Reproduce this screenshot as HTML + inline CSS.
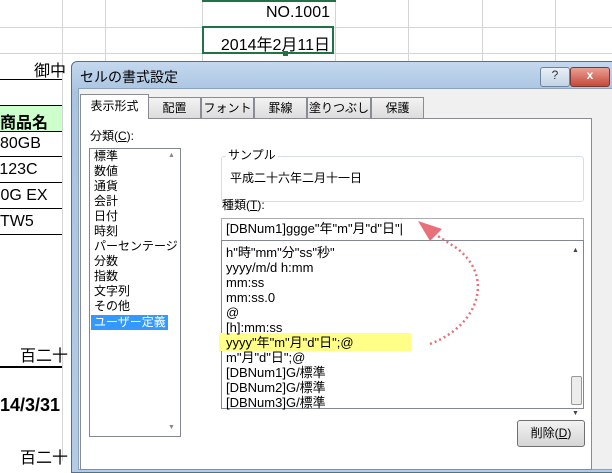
<html><head><style>
body{margin:0;width:612px;height:461px;overflow:hidden;background:#fff;font-family:"Liberation Sans","Noto Sans CJK JP",sans-serif;position:relative}
.a{position:absolute}
.vl{position:absolute;top:0;width:1px;height:461px;background:#d4d4d4}
.hl{position:absolute;left:0;height:1px;width:612px;background:#d4d4d4}
.s{font-size:16px;color:#000;white-space:nowrap}
.t{font-size:12px;color:#000;white-space:nowrap;line-height:15px}
.r{font-size:13px;color:#000;white-space:nowrap;line-height:15px}
</style></head><body>
<div class="vl" style="left:62px"></div><div class="vl" style="left:105px"></div><div class="vl" style="left:202px"></div><div class="vl" style="left:335px"></div><div class="vl" style="left:408px"></div><div class="vl" style="left:482px"></div><div class="vl" style="left:555px"></div>
<div class="hl" style="top:27px"></div><div class="hl" style="top:53px"></div>
<div class="a" style="left:202px;top:0;width:134px;height:2px;background:#217346"></div>
<div class="a s" style="left:202px;top:4px;width:128px;text-align:right">NO.1001</div>
<div class="a" style="left:202px;top:26px;width:128px;height:24px;border:2px solid #217346"></div>
<div class="a s" style="left:202px;top:31px;width:128px;text-align:right">2014年2月11日</div>
<div class="a" style="left:283px;top:51px;width:5px;height:5px;background:#217346"></div>
<div class="a s" style="left:0;top:57px;width:66px;text-align:right">御中</div>
<div class="a" style="left:0;top:79px;width:62px;height:1px;background:#000"></div>
<div class="a" style="left:0;top:105px;width:62px;height:25px;background:#ccffcc;border-top:1px solid #000;border-bottom:1px solid #000"></div>
<div class="a s" style="left:0;top:109px;font-weight:bold">商品名</div>
<div class="a s" style="left:0;top:135px">80GB</div>
<div class="a" style="left:0;top:156px;width:62px;height:1px;background:#000"></div>
<div class="a s" style="left:-6px;top:161px">-123C</div>
<div class="a" style="left:0;top:182px;width:62px;height:1px;background:#000"></div>
<div class="a s" style="left:-4px;top:187px">.0G EX</div>
<div class="a" style="left:0;top:208px;width:62px;height:1px;background:#000"></div>
<div class="a s" style="left:0;top:213px">TW5</div>
<div class="a" style="left:0;top:234px;width:62px;height:1px;background:#000"></div>
<div class="a s" style="left:20px;top:342px">百二十</div>
<div class="a" style="left:0;top:366px;width:62px;height:2px;background:#000"></div>
<div class="a s" style="left:0;top:395px;font-weight:bold;font-size:18px">14/3/31</div>
<div class="a s" style="left:20px;top:444px">百二十</div>

<!-- dialog -->
<div class="a" style="left:71px;top:61px;width:545px;height:410px;border-radius:6px 6px 0 0;background:linear-gradient(#c4d8ee,#a9c4e2 30px,#b3cbe6);border:1px solid #5a6f86"></div>
<div class="a" style="left:80px;top:67px;font-size:14px">セルの書式設定</div>
<div class="a" style="left:540px;top:67px;width:28px;height:18px;border:1px solid #6e849c;border-radius:3px;background:linear-gradient(#e8eff7,#c3d3e4);text-align:center;font-size:12px;color:#333">?</div>
<div class="a" style="left:570px;top:67px;width:38px;height:18px;border:1px solid #7a3a34;border-radius:3px;background:linear-gradient(#e8a093,#c7493a);text-align:center;font-size:12px;color:#fff;font-weight:bold">x</div>
<div class="a" style="left:78px;top:88px;width:534px;height:380px;background:#f0f0f0;border:1px solid #8ea3ba"></div>
<div class="a" style="left:80px;top:118px;width:510px;height:350px;background:#fff;border:1px solid #898c95"></div>
<div class="a t" style="left:80px;top:94px;width:67px;height:24px;background:#fff;border:1px solid #898c95;border-bottom:none;text-align:center;line-height:22px">表示形式</div>
<div class="a t" style="left:148px;top:97px;width:51px;height:20px;background:linear-gradient(#f3f3f3,#dcdcdc);border:1px solid #898c95;text-align:center;line-height:20px">配置</div>
<div class="a t" style="left:201px;top:97px;width:51px;height:20px;background:linear-gradient(#f3f3f3,#dcdcdc);border:1px solid #898c95;text-align:center;line-height:20px">フォント</div>
<div class="a t" style="left:254px;top:97px;width:51px;height:20px;background:linear-gradient(#f3f3f3,#dcdcdc);border:1px solid #898c95;text-align:center;line-height:20px">罫線</div>
<div class="a t" style="left:307px;top:97px;width:62px;height:20px;background:linear-gradient(#f3f3f3,#dcdcdc);border:1px solid #898c95;text-align:center;line-height:20px">塗りつぶし</div>
<div class="a t" style="left:371px;top:97px;width:51px;height:20px;background:linear-gradient(#f3f3f3,#dcdcdc);border:1px solid #898c95;text-align:center;line-height:20px">保護</div>
<div class="a t" style="left:90px;top:129px">分類(<u>C</u>):</div>
<div class="a" style="left:89px;top:148px;width:90px;height:287px;border:1px solid #828790;background:#fff"></div>
<div class="a" style="left:168px;top:152px;font-size:7px;color:#888">▲</div>
<div class="a" style="left:168px;top:424px;font-size:7px;color:#888">▼</div>
<div class="a t" style="left:94px;top:149px">標準<br>数値<br>通貨<br>会計<br>日付<br>時刻<br>パーセンテージ<br>分数<br>指数<br>文字列<br>その他</div>
<div class="a t" style="left:91px;top:315px;width:74px;background:#3399ff;color:#fff;padding-left:3px">ユーザー定義</div>
<div class="a" style="left:221px;top:156px;width:361px;height:44px;border:1px solid #d5dfe5;border-radius:3px"></div>
<div class="a t" style="left:226px;top:148px;background:#fff;padding:0 2px">サンプル</div>
<div class="a t" style="left:230px;top:171px">平成二十六年二月十一日</div>
<div class="a t" style="left:222px;top:198px">種類(<u>T</u>):</div>
<div class="a" style="left:221px;top:218px;width:361px;height:21px;border:1px solid #abadb3;background:#fff"></div>
<div class="a r" style="left:226px;top:221px">[DBNum1]ggge"年"m"月"d"日"|</div>
<div class="a" style="left:221px;top:240px;width:361px;height:167px;border:1px solid #828790;background:#fff"></div>
<div class="a" style="left:571px;top:376px;width:9px;height:27px;background:#ececec;border:1px solid #999;border-radius:2px"></div>
<div class="a" style="left:572px;top:247px;font-size:7px;color:#444">▲</div>
<div class="a" style="left:572px;top:410px;font-size:7px;color:#444">▼</div>
<div class="a" style="left:219px;top:333px;width:192px;height:18px;background:#ffff88"></div>
<div class="a r" style="left:226px;top:245px">h"時"mm"分"ss"秒"<br>yyyy/m/d h:mm<br>mm:ss<br>mm:ss.0<br>@<br>[h]:mm:ss<br>yyyy"年"m"月"d"日";@<br>m"月"d"日";@<br>[DBNum1]G/標準<br>[DBNum2]G/標準<br>[DBNum3]G/標準</div>
<div class="a t" style="left:517px;top:420px;width:66px;height:25px;border:1px solid #707070;border-radius:3px;background:linear-gradient(#f2f2f2,#d5d5d5);text-align:center;line-height:25px">削除(<u>D</u>)</div>
<svg class="a" style="left:400px;top:215px" width="90" height="140"><path d="M30 129 C80 110 95 60 55 32 L30 16" fill="none" stroke="#e8707a" stroke-width="2.5" stroke-dasharray="2 3"/><polygon points="18,6 42,14 30,26" fill="#e8707a"/></svg>
</body></html>
